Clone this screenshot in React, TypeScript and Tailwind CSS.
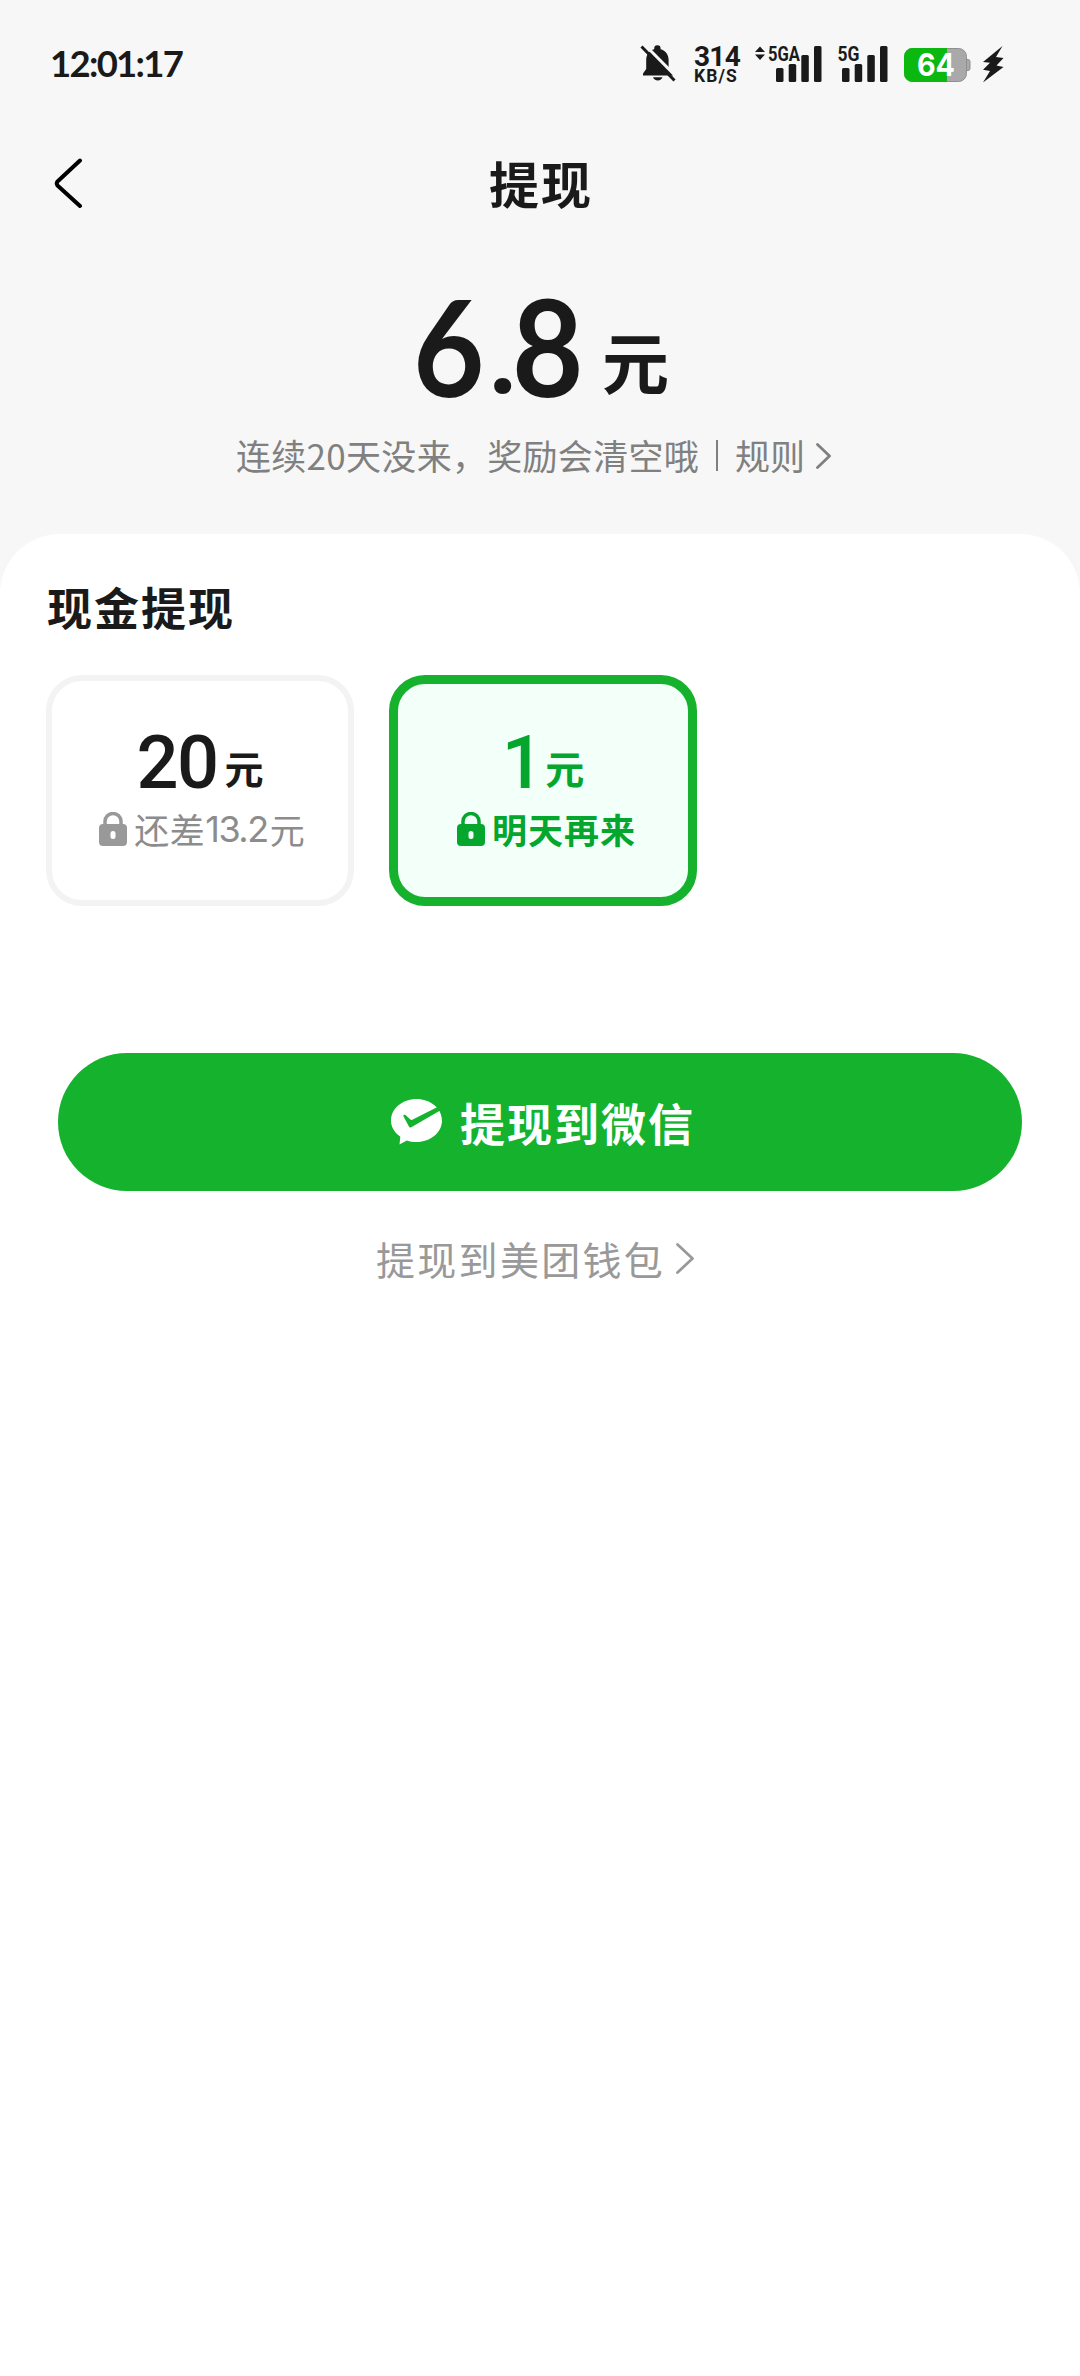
import type { ReactNode } from 'react';

interface SignalProps {
  label: string;
  labelWidth: number;
  arrows?: boolean;
}

interface AmountCardProps {
  amount: string;
  active?: boolean;
  children: ReactNode;
}

function BellOffIcon() {
  return (
    <svg width="37" height="38" viewBox="0 0 37 38" fill="#1a1a1a">
      <path d="M3 30.500v-2l3.200-4.500V15c0-5.500 3.200-9.600 8-10.800V3.400a3.200 3.200 0 0 1 6.400 0v.8c4.800 1.200 8 5.300 8 10.800v9l4.400 4.500v2z" />
      <path d="M13 32.300h9.500c-.6 2-2.400 3.200-4.700 3.200s-4.200-1.200-4.800-3.200z" />
      <path d="M4-1L37.500 33" stroke="#f7f7f7" strokeWidth="3" />
      <path d="M1.500 1.500L34.500 35.500" stroke="#1a1a1a" strokeWidth="3" />
    </svg>
  );
}

function Signal({ label, labelWidth, arrows }: SignalProps) {
  const x = arrows ? 21 : 5;
  return (
    <svg className="overflow-visible" width={x + 46} height="38" viewBox={`0 0 ${x + 46} 38`} fill="#1a1a1a">
      {arrows && <path d="M5 1.500l5 5.500H0zM5 15l-5-5.500h10z" />}
      <text
        x={arrows ? 13 : 0.500}
        y="16"
        fontSize="21"
        fontWeight="700"
        fontFamily="Roboto, sans-serif"
        textLength={labelWidth}
        lengthAdjust="spacingAndGlyphs"
      >
        {label}
      </text>
      <rect x={x} y="23" width="7.500" height="14" rx="1.500" />
      <rect x={x + 12.7} y="19" width="7.500" height="18" rx="1.500" />
      <rect x={x + 25.300} y="10" width="7.500" height="27" rx="1.500" />
      <rect x={x + 38} y="1" width="7.500" height="36" rx="1.500" />
    </svg>
  );
}

function Battery() {
  return (
    <svg width="67" height="36" viewBox="0 0 67 36">
      <rect x="0.500" y="1.500" width="62" height="33" rx="8" fill="#a9a9a9" stroke="#8f8f8f" />
      <path d="M62.500 12.500h1.500a2 2 0 0 1 2 2v7a2 2 0 0 1-2 2h-1.500z" fill="#a9a9a9" stroke="#8f8f8f" />
      <path d="M43 1H8.500a8.500 8.500 0 0 0-8.500 8.500v17A8.500 8.500 0 0 0 8.500 35H43z" fill="#0ab80f" />
      <text
        x="13"
        y="29"
        fontSize="31"
        fontWeight="700"
        fontFamily="Inter, sans-serif"
        fill="#fff"
        textLength="38"
        lengthAdjust="spacingAndGlyphs"
      >
        64
      </text>
    </svg>
  );
}

function BoltIcon() {
  return (
    <svg width="22" height="38" viewBox="0 0 22 38" fill="#1a1a1a">
      <path d="M20.500 1L1 17l7 .7-7 7 7 1.300L1 37.500l20.500-15.500-7-1.500 7-7.500-7.500-1z" />
    </svg>
  );
}

function LockIcon() {
  return (
    <svg width="28" height="34" viewBox="0 0 28 34">
      <path d="M6 14V9.500a8 8 0 0 1 16 0V14" fill="none" stroke="currentColor" strokeWidth="3.500" />
      <path
        fillRule="evenodd"
        fill="currentColor"
        d="M4 12h20a4 4 0 0 1 4 4v14a4 4 0 0 1-4 4H4a4 4 0 0 1-4-4V16a4 4 0 0 1 4-4zM14 19a2.500 2.500 0 0 0-2.500 2.500v3a2.500 2.500 0 0 0 5 0v-3A2.500 2.500 0 0 0 14 19z"
      />
    </svg>
  );
}

function ChevronIcon({ width, height }: { width: number; height: number }) {
  return (
    <svg width={width} height={height} viewBox={`0 0 ${width} ${height}`} fill="none" stroke="currentColor" strokeWidth="2.800" strokeLinecap="round" strokeLinejoin="round">
      <path d={`M1.500 1.500L${width - 1.5} ${height / 2}L1.500 ${height - 1.5}`} />
    </svg>
  );
}

function WechatPayIcon() {
  return (
    <svg width="51" height="46" viewBox="0 0 51 46">
      <path d="M25.500 0C39.600 0 51 9.600 51 21.500S39.600 43 25.500 43c-3.400 0-6.700-.6-9.700-1.600L8.500 45.500l.8-7.800C3.600 33.700 0 28 0 21.500 0 9.600 11.400 0 25.500 0z" fill="#fff" />
      <path d="M12.500 16.200c.5-.7 1.300-.6 2-.1l4.800 4.400c.6.500 1.200.6 2 .3L46.500 8l3.500 3-29.700 17.300c-1 .6-1.900.3-2.400-.7l-5.300-10c-.3-.5-.4-.9-.1-1.400z" fill="#14b22d" />
    </svg>
  );
}

function StatusBar() {
  return (
    <div className="flex h-[92px] items-start pt-[45px] pl-[50px] text-[#1a1a1a]">
      <span className="w-[590px] font-[Lato] text-[36.500px] leading-[37px] font-bold tracking-[-1.700px]">12:01:17</span>
      <BellOffIcon />
      <div className="ml-[17px] w-[61px] font-[Roboto] font-bold">
        <div className="text-[28px] leading-[23px] tracking-[-0.700px]">314</div>
        <div className="text-[17.500px] leading-[16px] tracking-[1.100px]">KB/S</div>
      </div>
      <Signal label="5GA" labelWidth={32} arrows />
      <div className="w-[15px]" />
      <Signal label="5G" labelWidth={22} />
      <div className="ml-[16px] pt-[2px]">
        <Battery />
      </div>
      <div className="ml-[11px]">
        <BoltIcon />
      </div>
    </div>
  );
}

function AmountCard({ amount, active, children }: AmountCardProps) {
  return (
    <div
      className={`flex h-[231px] w-[308px] flex-col items-center rounded-[36px] ${
        active ? 'border-[9px] border-[#16b12d] bg-[#f3fff9] pt-[39px] text-[#05a62e]' : 'border-[6px] border-[#f3f3f3] pt-[42px] text-[#1a1a1a]'
      }`}
    >
      <div className="flex h-[81px] items-start">
        <span className="font-[Roboto] text-[74px] leading-[80px] font-medium tracking-[-1.500px]">{amount}</span>
        <span className={`text-[39px] leading-[88px] font-bold ${active ? 'ml-[3px]' : 'ml-[7px]'}`}>元</span>
      </div>
      {children}
    </div>
  );
}

export default function App() {
  return (
    <div className="flex min-h-[2376px] w-[1080px] flex-col bg-[#f7f7f7] font-['Noto_Sans_CJK_SC',sans-serif] text-[#1a1a1a]">
      <StatusBar />

      {/* Nav bar */}
      <div className="flex h-[181px] items-start pt-[64px] pl-[54px]">
        <svg width="30" height="54" viewBox="0 0 30 54" fill="none" stroke="#000" strokeWidth="4" strokeLinecap="round" strokeLinejoin="round">
          <path d="M26 4.500L3.500 25.500q-1.500 2 0 4L26 50" />
        </svg>
        <h1 className="-mt-[4px] ml-[405px] text-[50px] leading-[60px] font-bold tracking-[2px]">提现</h1>
      </div>

      {/* Balance */}
      <div className="flex h-[153px] items-start pl-[413px] leading-[145px]">
        <span className="w-[73px] origin-left scale-x-92 font-[Lato] text-[134px] font-bold">6</span>
        <span className="w-[26px] font-[Roboto] text-[124px] leading-[156px] font-medium">.</span>
        <span className="w-[90px] origin-left scale-x-92 font-[Lato] text-[134px] font-bold">8</span>
        <span className="text-[67px] leading-[173px] font-bold">元</span>
      </div>
      <div className="flex h-[108px] items-start pt-[3px] pl-[236px] text-[35px] leading-[52px] text-[#808080]">
        <span className="tracking-[0.300px]">连续20天没来，奖励会清空哦</span>
        <span className="mt-[11px] ml-[17px] h-[31px] w-[2px] bg-[#808080]" />
        <span className="ml-[17px]">规则</span>
        <span className="mt-[14px] ml-[11px]">
          <ChevronIcon width={15} height={26} />
        </span>
      </div>

      {/* Withdraw panel */}
      <div className="flex-1 rounded-t-[60px] bg-white">
        <h2 className="pt-[41px] pl-[47px] text-[45px] leading-[64px] font-bold tracking-[2px]">现金提现</h2>
        <div className="mt-[36px] ml-[46px] flex gap-[35px]">
          <AmountCard amount="20">
            <div className="flex items-center pl-[4px] text-[35px] leading-[50px] text-[#8c8c8c]">
              <span className="text-[#999]">
                <LockIcon />
              </span>
              <span className="ml-[7px] tracking-[0.500px]">还差</span>
              <span className="font-[Inter] text-[36px] tracking-[-1.500px]">13.2</span>
              <span className="ml-[2px]">元</span>
            </div>
          </AmountCard>
          <AmountCard amount="1" active>
            <div className="flex items-center pl-[7px] text-[35px] leading-[50px] font-bold">
              <LockIcon />
              <span className="ml-[7px] tracking-[1px]">明天再来</span>
            </div>
          </AmountCard>
        </div>

        <button className="mt-[147px] ml-[58px] flex h-[138px] w-[964px] items-center rounded-full bg-[#14b22d] pl-[333px] text-white">
          <WechatPayIcon />
          <span className="mt-[2px] ml-[18px] text-[45px] leading-[64px] font-bold tracking-[2px]">提现到微信</span>
        </button>
        <div className="mt-[37px] flex items-center pl-[376px] text-[39px] leading-[60px] text-[#999]">
          <span className="tracking-[2.300px]">提现到美团钱包</span>
          <span className="ml-[11px]">
            <ChevronIcon width={18} height={31} />
          </span>
        </div>
      </div>
    </div>
  );
}
